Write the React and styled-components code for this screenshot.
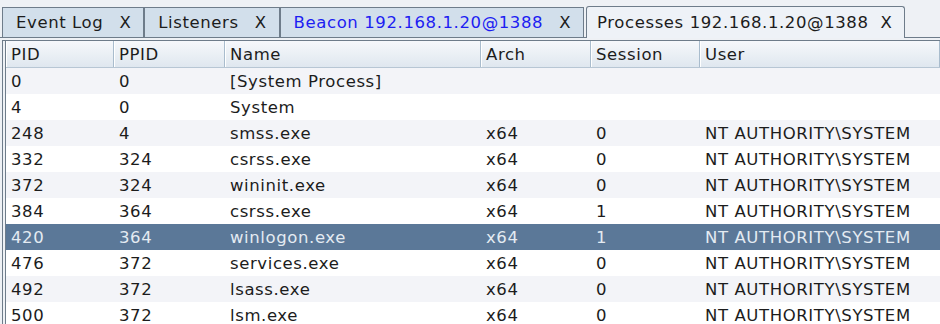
import React from "react";
import styled, { createGlobalStyle } from "styled-components";

const Global = createGlobalStyle`
  html, body { margin: 0; padding: 0; background: #eef1f5; }
  body {
    font-family: "DejaVu Sans", "Noto Sans", sans-serif;
    font-size: 16.5px;
    letter-spacing: 0.6px;
    color: #1c1c1c;
  }
`;

const Frame = styled.div`
  width: 940px;
  height: 324px;
  overflow: hidden;
  background: #eef1f5;
  display: flex;
  flex-direction: column;
`;

const TabStrip = styled.div`
  flex-shrink: 0;
  display: flex;
  align-items: flex-end;
  height: 37px;
  padding-left: 2px;
  border-bottom: 1px solid #6e7c8a;
`;

const Tab = styled.div`
  display: flex;
  align-items: center;
  gap: ${p => (p.$active ? "12px" : "16px")};
  height: ${p => (p.$active ? "32px" : "30px")};
  padding: ${p => (p.$active ? "0 12px 0 10px" : "0 12px 0 13px")};
  box-sizing: border-box;
  border: 1px solid #6e7c8a;
  border-bottom: none;
  margin-left: ${p => (p.$active ? "2px" : "0")};
  background: ${p => (p.$active ? "#eef2f7" : "#d2dfeb")};
  border-radius: ${p => (p.$active ? "3px 3px 0 0" : "0")};
  color: ${p => (p.$blue ? "#1d1df2" : "#1c1c1c")};
  white-space: nowrap;
  position: relative;
  top: ${p => (p.$active ? "1px" : "0")};
`;

const Close = styled.span`
  color: #1c1c1c;
`;

const Panel = styled.div`
  flex: 1;
  min-height: 0;
  overflow: hidden;
  margin-left: 2px;
  margin-top: 2px;
  border-top: 1px solid #6e7c8a;
  border-left: 1px solid #6e7c8a;
  padding: 0 0 0 2px;
  display: flex;
`;

const TableBox = styled.div`
  flex: 1;
  border-left: 1px solid #6e7c8a;
  background: #ffffff;
`;

const cols = "108px 111px 256px 110px 109px 1fr";

const HeaderRow = styled.div`
  display: grid;
  grid-template-columns: ${cols};
  height: 27px;
  background: linear-gradient(#f6f8fb, #dfe7ef);
  border-bottom: 1px solid #b7c6d4;
  box-sizing: border-box;
`;

const HeadCell = styled.div`
  display: flex;
  align-items: center;
  padding-left: 4px;
  border-right: 1px solid #a9bccd;
  border-left: 1px solid #ffffff;
  white-space: nowrap;
`;

const Row = styled.div`
  display: grid;
  grid-template-columns: ${cols};
  height: 26px;
  background: ${p => (p.$selected ? "#5b7898" : p.$alt ? "#f3f4f8" : "#ffffff")};
  color: ${p => (p.$selected ? "#e4ebf2" : "#1c1c1c")};
`;

const Cell = styled.div`
  display: flex;
  align-items: center;
  padding-left: 5px;
  white-space: nowrap;
  overflow: hidden;
`;

const rows = [
  ["0", "0", "[System Process]", "", "", ""],
  ["4", "0", "System", "", "", ""],
  ["248", "4", "smss.exe", "x64", "0", "NT AUTHORITY\\SYSTEM"],
  ["332", "324", "csrss.exe", "x64", "0", "NT AUTHORITY\\SYSTEM"],
  ["372", "324", "wininit.exe", "x64", "0", "NT AUTHORITY\\SYSTEM"],
  ["384", "364", "csrss.exe", "x64", "1", "NT AUTHORITY\\SYSTEM"],
  ["420", "364", "winlogon.exe", "x64", "1", "NT AUTHORITY\\SYSTEM"],
  ["476", "372", "services.exe", "x64", "0", "NT AUTHORITY\\SYSTEM"],
  ["492", "372", "lsass.exe", "x64", "0", "NT AUTHORITY\\SYSTEM"],
  ["500", "372", "lsm.exe", "x64", "0", "NT AUTHORITY\\SYSTEM"],
];

const headers = ["PID", "PPID", "Name", "Arch", "Session", "User"];

export default function App() {
  return (
    <Frame>
      <Global />
      <TabStrip>
        <Tab>Event Log<Close>X</Close></Tab>
        <Tab>Listeners<Close>X</Close></Tab>
        <Tab $blue>Beacon 192.168.1.20@1388<Close>X</Close></Tab>
        <Tab $active>Processes 192.168.1.20@1388<Close>X</Close></Tab>
      </TabStrip>
      <Panel>
        <TableBox>
          <HeaderRow>
            {headers.map(h => <HeadCell key={h}>{h}</HeadCell>)}
          </HeaderRow>
          {rows.map((r, i) => (
            <Row key={i} $alt={i % 2 === 0} $selected={r[0] === "420"}>
              {r.map((c, j) => <Cell key={j}>{c}</Cell>)}
            </Row>
          ))}
        </TableBox>
      </Panel>
    </Frame>
  );
}
